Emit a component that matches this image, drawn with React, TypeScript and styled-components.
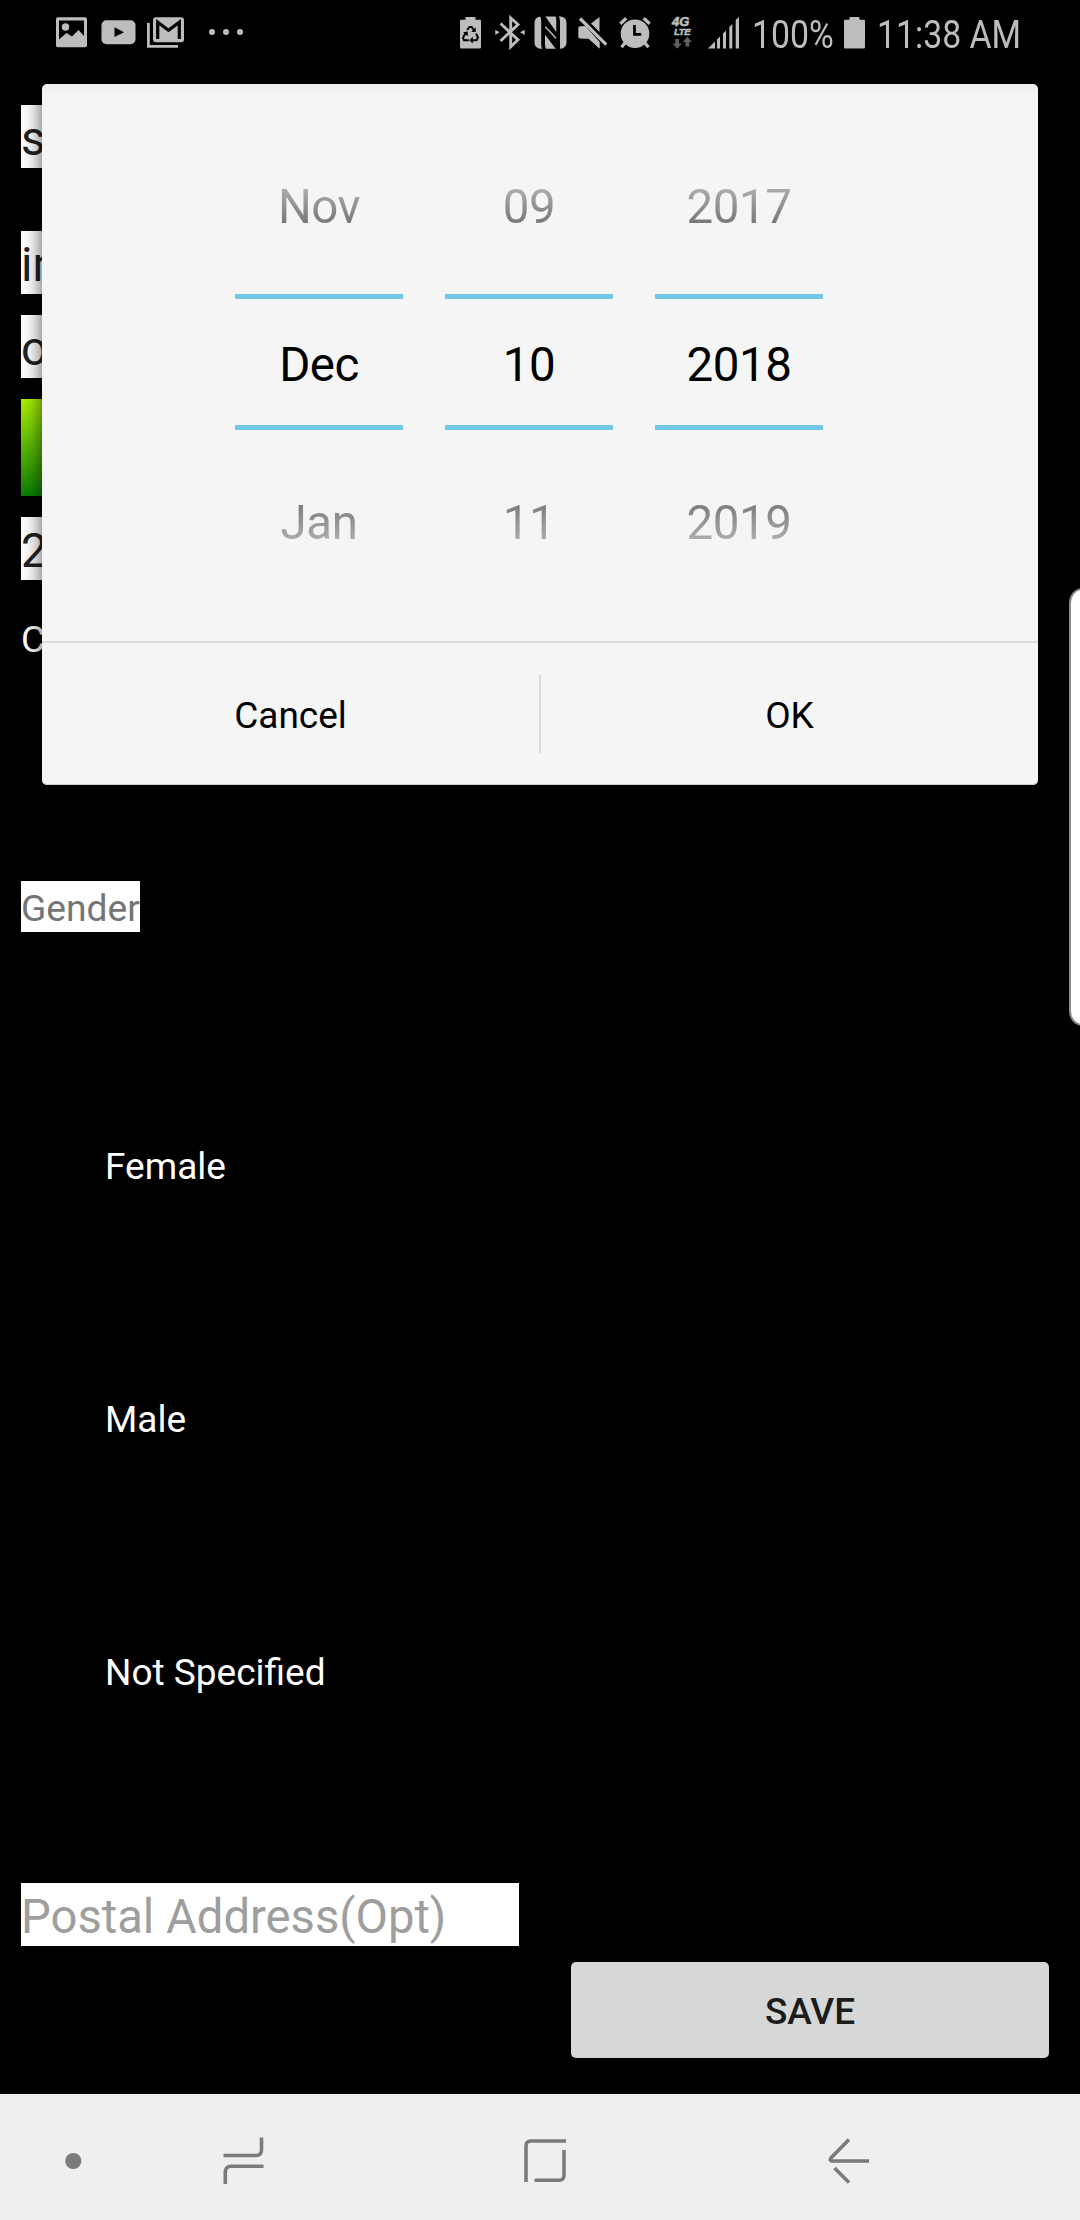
import React from "react";
import styled, { createGlobalStyle } from "styled-components";

const GlobalStyle = createGlobalStyle`
  * { box-sizing: border-box; }
  html, body { margin: 0; padding: 0; background: #000; }
  body { font-family: Roboto, "Noto Sans", sans-serif; overflow: hidden; }
  button { font-family: inherit; border: 0; padding: 0; margin: 0; background: none; }
`;

const Screen = styled.div`
  position: relative;
  width: 1080px;
  height: 2220px;
  display: flex;
  flex-direction: column;
  overflow: hidden;
  background: #000;
`;

const StatusBar = styled.header`
  flex: none;
  height: 72px;
  padding: 14px 0 0 56px;
  display: flex;
  align-items: flex-start;
  color: #bdbdbd;
`;

const StatusGroup = styled.div<{ $push?: number }>`
  display: flex;
  align-items: flex-start;
  margin-left: ${(p) => p.$push ?? 0}px;
`;

const Glyph = styled.svg<{ $before?: number }>`
  display: block;
  flex: none;
  margin-left: ${(p) => p.$before ?? 0}px;
`;

const StatusText = styled.span<{ $width: number; $before: number }>`
  width: ${(p) => p.$width}px;
  margin-left: ${(p) => p.$before}px;
  font-size: 38.5px;
  line-height: 42px;
  white-space: nowrap;

  span {
    display: inline-block;
    transform: scaleX(0.878);
    transform-origin: left center;
  }
`;

const Form = styled.main`
  flex: 1;
  display: flex;
  flex-direction: column;
  align-items: flex-start;
  padding: 33px 31px 0 21px;
`;

const Field = styled.div<{ $before?: number; $width?: number; $hint?: boolean }>`
  flex: none;
  height: 63px;
  width: ${(p) => (p.$width ? `${p.$width}px` : "auto")};
  margin-top: ${(p) => p.$before ?? 0}px;
  padding: 5px 1px 0 0;
  background: #fff;
  color: ${(p) => (p.$hint ? "#9e9e9e" : "#212121")};
  font-size: 47.2px;
  line-height: 59px;
  white-space: nowrap;
`;

const DateButton = styled.button`
  flex: none;
  width: 498px;
  height: 97px;
  margin-top: 21px;
  background: linear-gradient(#aaf000 0%, #0a8000 100%);
`;

const Label = styled.div<{ $before: number; $filled?: boolean }>`
  flex: none;
  height: 51px;
  margin-top: ${(p) => p.$before}px;
  padding-top: 3px;
  font-size: 37.2px;
  line-height: 48px;
  background: ${(p) => (p.$filled ? "#fff" : "transparent")};
  color: ${(p) => (p.$filled ? "#757575" : "#fff")};
`;

const Options = styled.div`
  flex: none;
  display: flex;
  flex-direction: column;
  margin-top: 108px;
  padding-left: 84px;
`;

const Option = styled.label`
  height: 253px;
  font-size: 37px;
  line-height: 253px;
  color: #fff;
`;

const SaveButton = styled.button`
  flex: none;
  align-self: flex-end;
  width: 478px;
  height: 96px;
  margin-top: 16px;
  padding-top: 1px;
  border-radius: 5px;
  background: #d6d8d7;
  color: #1b1c1b;
  font-size: 37px;
  font-weight: 500;
  line-height: 98px;
`;

const NavBar = styled.nav`
  flex: none;
  height: 126px;
  padding-left: 65px;
  display: flex;
  align-items: center;
  background: #efefef;
`;

const Dialog = styled.section`
  position: absolute;
  left: 42px;
  top: 84px;
  width: 996px;
  height: 701px;
  display: flex;
  flex-direction: column;
  border-radius: 5px;
  background: linear-gradient(#efefef, #f5f5f5 12px);
  box-shadow: inset 0 -1px 0 #c9cccb, 0 4px 20px rgba(0, 0, 0, 0.68);
`;

const Pickers = styled.div`
  height: 557px;
  padding: 44px 0 0 193px;
  display: flex;
  gap: 42px;
`;

const Wheel = styled.div`
  width: 168px;
  display: flex;
  flex-direction: column;
  text-align: center;
  font-size: 47.5px;
  letter-spacing: -0.5px;
`;

const Faded = styled.div<{ $edge: "above" | "below" }>`
  height: 166px;
  padding-top: ${(p) => (p.$edge === "above" ? 0 : 14)}px;
  line-height: 158px;
  color: transparent;
  background: ${(p) =>
    p.$edge === "above"
      ? "linear-gradient(#b0b0b0 58px, #757575 97px)"
      : "linear-gradient(#7b7b7b 73px, #b0b0b0 113px)"};
  -webkit-background-clip: text;
  background-clip: text;
`;

const Chosen = styled.div`
  height: 136px;
  border-top: 5px solid #72c7e7;
  border-bottom: 5px solid #72c7e7;
  padding-top: 3px;
  line-height: 126px;
  color: #000;
`;

const Actions = styled.div`
  height: 144px;
  border-top: 2px solid #dbdbdb;
  display: flex;
  align-items: center;
`;

const Action = styled.button`
  flex: 1;
  height: 142px;
  padding-top: 2px;
  font-size: 37px;
  color: #000;
`;

const Separator = styled.div`
  width: 2px;
  height: 78px;
  background: #dbdbdb;
`;

const EdgeHandle = styled.div`
  position: absolute;
  left: 1069px;
  top: 588px;
  width: 26px;
  height: 438px;
  border: 2px solid #8c8c8c;
  border-radius: 15px / 18px;
  background: #fff;
`;

const wheels = [
  ["Nov", "Dec", "Jan"],
  ["09", "10", "11"],
  ["2017", "2018", "2019"],
];

const G = "#bdbdbd";

function NotificationIcons() {
  return (
    <StatusGroup>
      <Glyph width="31" height="36" viewBox="0 0 31 36">
        <rect x="0" y="3.3" width="31" height="30" rx="2" fill={G} />
        <path d="M3 6.5H28V22L22.5 16L16 22.5L10.5 19L3 25.5Z" fill="#000" />
        <circle cx="9.5" cy="13" r="3.7" fill={G} />
      </Glyph>
      <Glyph $before={14} width="35" height="36" viewBox="0 0 35 36">
        <rect x="0.5" y="6.2" width="34" height="24" rx="5" fill={G} />
        <path d="M13.5 13.3L23 18.2L13.5 23Z" fill="#000" />
      </Glyph>
      <Glyph $before={11} width="37" height="36" viewBox="0 0 37 36">
        <rect x="6" y="3.2" width="31" height="25" rx="3" fill={G} />
        <path d="M10.7 25V8.3L21.5 16.3L32.3 8.3V25" fill="none" stroke="#000" strokeWidth="3.2" />
        <path d="M1.4 9V32.4H31" fill="none" stroke={G} strokeWidth="2.8" />
      </Glyph>
      <Glyph $before={25} width="36" height="36" viewBox="0 0 36 36">
        <circle cx="3" cy="18" r="3" fill={G} />
        <circle cx="17" cy="18" r="3" fill={G} />
        <circle cx="31" cy="18" r="3" fill={G} />
      </Glyph>
    </StatusGroup>
  );
}

function SystemIcons() {
  return (
    <StatusGroup $push={215}>
      <Glyph width="21" height="36" viewBox="0 0 21 36">
        <path d="M0 7Q0 5.7 1.3 5.7H5.5V3H15.5V5.7H19.7Q21 5.7 21 7V33Q21 34.5 19.7 34.5H1.3Q0 34.5 0 33Z" fill={G} />
        <path d="M7.2 16L9.5 13H11.8L14 16.5M16 19.5L18 23.5L16.5 26.3H12.3M8.8 26.3H4L3 23.5L5.6 19" fill="none" stroke="#000" strokeWidth="2" />
        <path d="M15.7 13.2V18H11.2ZM12.8 22.8V29.5L9.3 26.3ZM3 18.2L7.8 17.6L7.8 22.2Z" fill="#000" />
      </Glyph>
      <Glyph $before={14} width="30" height="36" viewBox="0 0 30 36">
        <path d="M5.5 9.5L23 25.8L15.7 32.8V4L23 10.5L5.5 27" fill="none" stroke={G} strokeWidth="2.9" />
        <path d="M0.3 15.7L4.5 18.3L0.3 21Z M29.7 15.7L25 18.3L29.7 21Z" fill={G} />
      </Glyph>
      <Glyph $before={9} width="33" height="36" viewBox="0 0 33 36">
        <rect x="0.5" y="2.5" width="32" height="32.3" rx="6" fill={G} />
        <path d="M6 2H11L22.3 18V7Q22.3 3.5 21.3 2H24.5Q26 4 26 7V35.3H22L11 20.5V30Q11 33.5 12 35.3H8.2Q7.2 33.5 7.2 30V7Q7.2 4 6 2Z" fill="#000" />
        <path d="M11.3 12.8L22 24.2" fill="none" stroke={G} strokeWidth="1.5" />
      </Glyph>
      <Glyph $before={11} width="30" height="36" viewBox="0 0 30 36">
        <path d="M2 12.2H10L21.5 24V34.5L10.5 24.5H2Q0.3 24.5 0.3 22.8V14Q0.3 12.2 2 12.2Z" fill={G} />
        <path d="M13 9.5L21.5 3V18Z" fill={G} />
        <path d="M2.8 3.8L28 30.8" stroke="#000" strokeWidth="6" />
        <path d="M2 4.5L28.2 30.6" stroke={G} strokeWidth="3.2" />
        <path d="M5 12.2H7.5L21.5 28V34.5L10.5 24.5H5Z" fill={G} />
      </Glyph>
      <Glyph $before={11} width="32" height="36" viewBox="0 0 32 36">
        <circle cx="16" cy="19.7" r="14.3" fill={G} />
        <path d="M1.3 9.8L7.3 4.3M30.7 9.8L24.7 4.3" stroke={G} strokeWidth="3.2" />
        <path d="M6 29L2.5 33.3M26 29L29.5 33.3" stroke={G} strokeWidth="3.2" />
        <path d="M15.5 11V20.3H22.3" fill="none" stroke="#000" strokeWidth="2.8" />
      </Glyph>
      <Glyph $before={20} width="22" height="36" viewBox="0 0 22 36">
        <text x="1" y="12.4" fontFamily="Liberation Sans, sans-serif" fontWeight="700" fontStyle="italic" fontSize="13" stroke={G} strokeWidth="0.6" fill={G}>4G</text>
        <text x="3" y="20.8" fontFamily="Liberation Sans, sans-serif" fontWeight="700" fontStyle="italic" fontSize="9.6" letterSpacing="-0.4" stroke={G} strokeWidth="0.5" fill={G}>LTE</text>
        <path d="M4.3 25H8V29.5H10.8L6.2 34.8L1.6 29.5H4.3Z M14.5 32.5H18.2V28H20.8L16.3 22.8L11.8 28H14.5Z" fill="#5f5f5f" />
      </Glyph>
      <Glyph $before={15} width="31" height="36" viewBox="0 0 31 36">
        <path d="M0 34.5L7 27.5V34.5Z M9 25.5L12 22.5V34.5H9Z M15 19.5L18 16.5V34.5H15Z M21.3 13L24.3 10V34.5H21.3Z M27.7 6L31 3V34.5H27.7Z" fill={G} />
      </Glyph>
      <StatusText $before={13} $width={80}><span>100%</span></StatusText>
      <Glyph $before={12} width="21" height="36" viewBox="0 0 21 36">
        <path d="M0 7Q0 5.7 1.3 5.7H5.5V4Q5.5 3 6.5 3H14.5Q15.5 3 15.5 4V5.7H19.7Q21 5.7 21 7V33Q21 34.5 19.7 34.5H1.3Q0 34.5 0 33Z" fill={G} />
      </Glyph>
      <StatusText $before={12} $width={150}><span>11:38 AM</span></StatusText>
    </StatusGroup>
  );
}

function NavIcons() {
  return (
    <NavBar>
      <Glyph width="17" height="50" viewBox="0 0 17 50">
        <circle cx="8.3" cy="29" r="8.1" fill="#7b7b7b" />
      </Glyph>
      <Glyph $before={141} width="42" height="54" viewBox="0 -2 42 54" fill="none" stroke="#7b7b7b" strokeWidth="3.6">
        <path d="M0.5 23.5H33Q38.5 23.5 38.5 18V5.5" />
        <path d="M40.5 34.3H8Q2.3 34.3 2.3 40V52" />
      </Glyph>
      <Glyph $before={259} width="43" height="50" viewBox="0 0 43 50" fill="none" stroke="#7b7b7b" strokeWidth="3.6">
        <path d="M2 50V14Q2 9 7 9H42" />
        <path d="M10.5 48.2H35Q40 48.2 40 43.5V18" />
      </Glyph>
      <Glyph $before={261} width="43" height="54" viewBox="0 -2 43 54" fill="none" stroke="#7b7b7b" strokeWidth="3.6">
        <path d="M21 7.5L3 26Q1 29 5 29H41" />
        <path d="M6.5 36L21 50.5" />
      </Glyph>
    </NavBar>
  );
}

export default function App() {
  return (
    <>
      <GlobalStyle />
      <Screen>
        <StatusBar>
          <NotificationIcons />
          <SystemIcons />
        </StatusBar>

        <Form>
          <Field $width={498}>s</Field>
          <Field $before={63} $width={498}>in</Field>
          <Field $before={21} $width={498}>o</Field>
          <DateButton />
          <Field $before={21} $width={498}>2</Field>
          <Label $before={32}>C</Label>
          <Label $before={218} $filled>Gender</Label>
          <Options>
            <Option>Female</Option>
            <Option>Male</Option>
            <Option>Not Specified</Option>
          </Options>
          <Field $before={84} $width={498} $hint>Postal Address(Opt)</Field>
          <SaveButton>SAVE</SaveButton>
        </Form>

        <NavIcons />

        <Dialog>
          <Pickers>
            {wheels.map(([previous, current, next]) => (
              <Wheel key={current}>
                <Faded $edge="above">{previous}</Faded>
                <Chosen>{current}</Chosen>
                <Faded $edge="below">{next}</Faded>
              </Wheel>
            ))}
          </Pickers>
          <Actions>
            <Action>Cancel</Action>
            <Separator />
            <Action>OK</Action>
          </Actions>
        </Dialog>

        <EdgeHandle />
      </Screen>
    </>
  );
}
